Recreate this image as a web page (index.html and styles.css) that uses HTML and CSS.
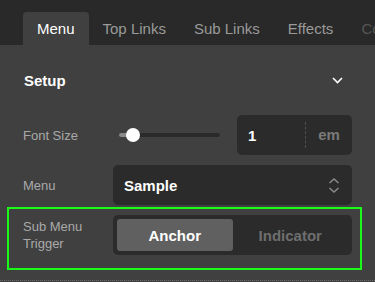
FILE: index.html
```html
<!DOCTYPE html>
<html lang="en">
<head>
    <meta charset="UTF-8">
    <meta name="viewport" content="width=device-width, initial-scale=1.0">
    <title>Menu Settings</title>
    <link rel="stylesheet" href="styles.css">
</head>
<body>

    <!-- Tabs -->
    <div class="tabs">
        <div class="tab active">Menu</div>
        <div class="tab">Top Links</div>
        <div class="tab">Sub Links</div>
        <div class="tab">Effects</div>
        <div class="tab">Colors</div>
    </div>

    <div class="panel">
        <!-- Section header -->
        <div class="section-head">
            <span>Setup</span>
            <svg class="chevron" width="11" height="7" viewBox="0 0 11 7">
                <polyline points="1,1 5.5,5.5 10,1" fill="none" stroke="#fff" stroke-width="1.6"/>
            </svg>
        </div>

        <!-- Font size -->
        <div class="row">
            <label class="label">Font Size</label>
            <div class="control">
                <div class="slider">
                    <div class="track">
                        <div class="fill" style="width: 14px"></div>
                        <div class="thumb" style="left: 14px"></div>
                    </div>
                </div>
                <div class="number">
                    <span class="value">1</span>
                    <span class="unit">em</span>
                </div>
            </div>
        </div>

        <!-- Menu select -->
        <div class="row">
            <label class="label">Menu</label>
            <div class="control">
                <div class="select">
                    <span>Sample</span>
                    <svg width="12" height="15" viewBox="0 0 12 15">
                        <polyline points="1.5,5 6,1 10.5,5" fill="none" stroke="#8a8a8a" stroke-width="1.5"/>
                        <polyline points="1.5,10 6,14 10.5,10" fill="none" stroke="#8a8a8a" stroke-width="1.5"/>
                    </svg>
                </div>
            </div>
        </div>

        <!-- Sub menu trigger (highlighted) -->
        <div class="row highlight">
            <label class="label">Sub Menu<br>Trigger</label>
            <div class="control">
                <div class="segmented">
                    <div class="seg active">Anchor</div>
                    <div class="seg">Indicator</div>
                </div>
            </div>
        </div>
    </div>

</body>
</html>
```

FILE: styles.css
```css
body {
    margin: 0;
    font-family: "Liberation Sans", Arial, sans-serif;
    background-color: #404040;
    color: #fff;
    overflow: hidden;
}

.tabs {
    display: flex;
    align-items: flex-end;
    height: 45px;
    padding-left: 23px;
    background-color: #292929;
    white-space: nowrap;
    overflow: hidden;
}

.tab {
    height: 33px;
    line-height: 33px;
    padding: 0 14px;
    font-size: 15px;
    color: #9a9a9a;
    border-radius: 4px 4px 0 0;
}

.tab:last-child {
    color: #555;
}

.tab.active {
    background-color: #404040;
    color: #fff;
}

.panel {
    padding-bottom: 10px;
    border-bottom: 1px dotted #6a6a6a;
}

.section-head {
    display: flex;
    align-items: center;
    justify-content: space-between;
    height: 70px;
    padding: 0 32px 0 24px;
    font-size: 15px;
    font-weight: bold;
}

.row {
    display: flex;
    align-items: center;
    padding: 0 23px;
    margin-bottom: 10px;
}

.row.highlight {
    margin: -8px 13px 0 7px;
    padding: 6px 8px 13px 14px;
    border: 2px solid #19fa19;
}

.label {
    width: 90px;
    font-size: 13px;
    line-height: 17px;
    color: #a9a9a9;
}

.control {
    flex: 1;
    display: flex;
    align-items: center;
}

.slider {
    flex: 1;
    padding: 0 17px 0 6px;
}

.track {
    position: relative;
    height: 4px;
    border-radius: 2px;
    background-color: #2a2a2a;
}

.fill {
    height: 4px;
    border-radius: 2px 0 0 2px;
    background-color: #8a8a8a;
}

.thumb {
    position: absolute;
    top: -5px;
    width: 14px;
    height: 14px;
    margin-left: -7px;
    border-radius: 50%;
    background-color: #fff;
}

.number {
    display: flex;
    align-items: center;
    width: 115px;
    height: 40px;
    border-radius: 5px;
    background-color: #2b2b2b;
    font-size: 15px;
    font-weight: bold;
}

.number .value {
    flex: 1;
    padding-left: 11px;
}

.number .unit {
    width: 46px;
    height: 26px;
    line-height: 26px;
    text-align: center;
    color: #7a7a7a;
    border-left: 1px dashed #4e4e4e;
}

.select {
    flex: 1;
    display: flex;
    align-items: center;
    justify-content: space-between;
    height: 40px;
    padding: 0 12px 0 11px;
    border-radius: 5px;
    background-color: #2b2b2b;
    font-size: 15px;
    font-weight: bold;
}

.segmented {
    flex: 1;
    display: flex;
    height: 40px;
    padding: 4px;
    box-sizing: border-box;
    border-radius: 5px;
    background-color: #2b2b2b;
}

.seg {
    flex: 1;
    display: flex;
    align-items: center;
    justify-content: center;
    border-radius: 3px;
    font-size: 15px;
    font-weight: bold;
    color: #6e6e6e;
}

.seg.active {
    background-color: #606060;
    color: #fff;
}
```
